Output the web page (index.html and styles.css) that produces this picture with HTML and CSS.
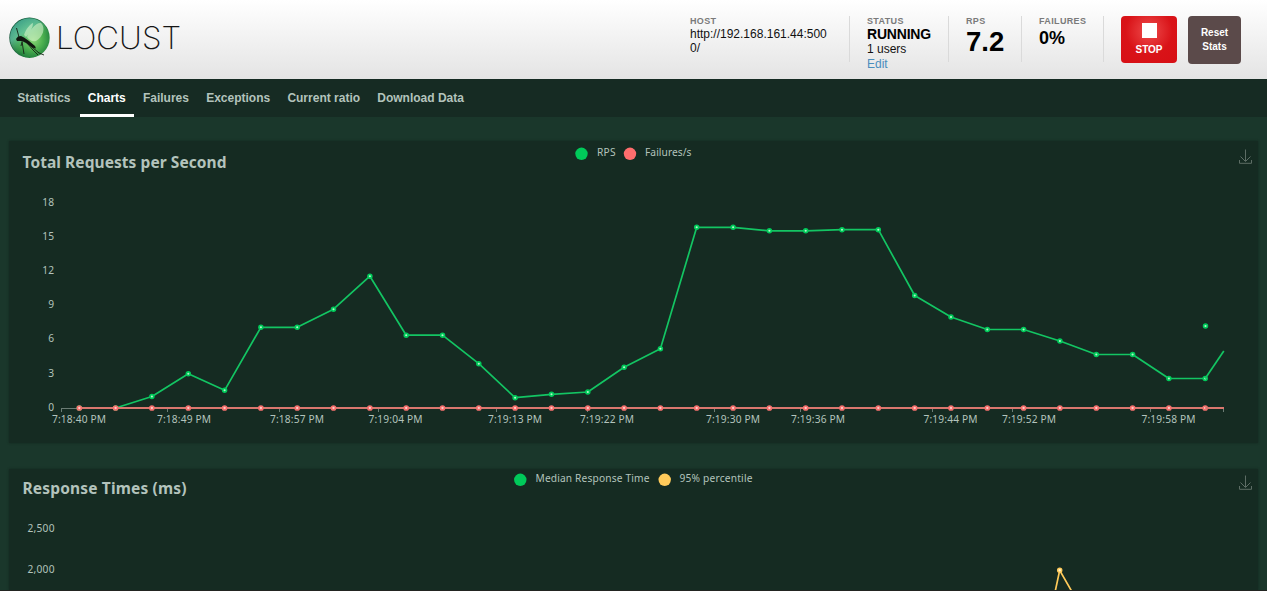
FILE: index.html
```html
<!DOCTYPE html>
<html lang="en">
<head>
<meta charset="utf-8">
<title>Locust</title>
<link rel="stylesheet" href="styles.css">
</head>
<body>
<header class="top">
  <div class="brand">
    <svg class="logo" width="42" height="42" viewBox="0 0 42 42">
      <defs>
        <radialGradient id="orb" cx="58%" cy="55%" r="56%">
          <stop offset="0" stop-color="#8fd879"/><stop offset=".45" stop-color="#4cb04f"/><stop offset=".8" stop-color="#25853f"/><stop offset="1" stop-color="#125638"/>
        </radialGradient>
        <linearGradient id="sheen" x1="0" y1="0" x2=".7" y2="1">
          <stop offset="0" stop-color="#2c9b80"/><stop offset=".4" stop-color="#71ceb0" stop-opacity=".7"/><stop offset=".75" stop-color="#5ec44f" stop-opacity="0"/>
        </linearGradient>
      </defs>
      <circle cx="20.5" cy="20.700" r="20.2" fill="url(#orb)"/>
      <circle cx="20.5" cy="20.700" r="19.5" fill="url(#sheen)"/>
      <path d="M15 18C17 12 21 7 24 6C24 11 20 17 17 20ZM18 20C21 13 27 5 32 6C37 11 34 20 27 24C23 25 20 23 18 20Z" fill="#d5f3cc" opacity=".6"/>
      <path d="M7 22L9 19.500L12 19L15 20.500L20 24L26 29L27 31.500L23 30.500L17 26L13 24L8 24Z" fill="#10170f"/>
      <path d="M10 20L7.500 11M13 24L14 31L15 37M13 25L12 29M18 26L24 33L29 38M23 30L30 36L35 38" fill="none" stroke="#152014" stroke-width=".9"/>
    </svg>
    <svg class="wordmark" width="126" height="42" viewBox="0 0 126 42"><text x="-1" y="32.300" textLength="125" lengthAdjust="spacingAndGlyphs">LOCUST</text></svg>
  </div>
  <div class="boxes">
    <div class="box host"><div class="label">HOST</div><div class="value">http://192.168.161.44:5000/</div></div>
    <div class="box status"><div class="label">STATUS</div><div class="running">RUNNING</div><div class="value">1 users</div><a class="edit">Edit</a></div>
    <div class="box rps"><div class="label">RPS</div><div class="big">7.2</div></div>
    <div class="box fail"><div class="label">FAILURES</div><div class="percent">0%</div></div>
    <button class="btn stop"><span class="square"></span>STOP</button>
    <button class="btn reset">Reset<br>Stats</button>
  </div>
</header>
<nav class="tabs">
  <a class="tab">Statistics</a><a class="tab active">Charts</a><a class="tab">Failures</a><a class="tab">Exceptions</a><a class="tab">Current ratio</a><a class="tab">Download Data</a>
</nav>
<main class="charts">
  <svg class="chart" width="1249" height="302" viewBox="9 141 1249 302">
    <defs>
      <marker id="g" markerUnits="userSpaceOnUse" markerWidth="8" markerHeight="8" refX="4" refY="4"><circle cx="4" cy="4" r="1.900" fill="#b4f5cb" stroke="#00ca5a" stroke-width="1.700"/></marker>
      <marker id="r" markerUnits="userSpaceOnUse" markerWidth="8" markerHeight="8" refX="4" refY="4"><circle cx="4" cy="4" r="2" fill="#ffc9c6" stroke="#f5706d" stroke-width="1.700"/></marker>
    </defs>
    <text class="title" x="22.500" y="168" textLength="204">Total Requests per Second</text>
    <circle cx="581.500" cy="153.800" r="6.200" fill="#00ca5a"/><text x="597" y="156" textLength="18.500">RPS</text>
    <circle cx="630" cy="153.800" r="6.200" fill="#ff6d6d"/><text x="645" y="156" textLength="46.500">Failures/s</text>
    <path class="save" d="M1245.500 149.500V161M1240.500 156.500L1245.500 161.500L1250.500 156.500M1239.500 160V163.300H1251.500V160"/>
    <g class="yaxis">
      <text x="54" y="206">18</text><text x="54" y="240">15</text><text x="54" y="274">12</text><text x="54" y="308">9</text><text x="54" y="342">6</text><text x="54" y="377">3</text><text x="54" y="411">0</text>
    </g>
    <path class="axis" d="M61 408.500H1224M61.500 408V412M167.500 408V412M279.500 408V412M378.500 408V412M496.500 408V412M587.500 408V412M714.500 408V412M800.500 408V412M932.500 408V412M1012.500 408V412M1150.500 408V412M1223.500 408V412"/>
    <g class="xaxis">
      <text x="52" y="423" textLength="54">7:18:40 PM</text><text x="157" y="423" textLength="54">7:18:49 PM</text><text x="270" y="423" textLength="54">7:18:57 PM</text><text x="368.500" y="423" textLength="54">7:19:04 PM</text><text x="488" y="423" textLength="54">7:19:13 PM</text><text x="580" y="423" textLength="54">7:19:22 PM</text><text x="706" y="423" textLength="54">7:19:30 PM</text><text x="791" y="423" textLength="54">7:19:36 PM</text><text x="923.500" y="423" textLength="54">7:19:44 PM</text><text x="1002" y="423" textLength="54">7:19:52 PM</text><text x="1141.500" y="423" textLength="54">7:19:58 PM</text>
    </g>
    <path class="line green" d="M79.300 408L115.600 408L151.900 396.500L188.300 373.700L224.600 390.300L260.900 327.300L297.200 327.300L333.500 309.200L369.900 276.200L406.200 335.200L442.500 335.200L478.800 363.700L515.100 397.700L551.500 394.300L587.800 392L624.100 367.200L660.400 348.800L696.700 227.300L733.100 227.300L769.400 230.800L805.700 230.800L842 229.700L878.300 229.700L914.700 295.500L951 317L987.300 329.500L1023.600 329.500L1059.900 341L1096.300 354.500L1132.600 354.500L1168.900 378.500L1205.200 378.500"/>
    <path class="line-tail" d="M1205.200 378.500L1223.800 351"/>
    <circle cx="1205.500" cy="326" r="1.900" fill="#b4f5cb" stroke="#00ca5a" stroke-width="1.700"/>
    <path class="line red" d="M79.300 408L115.600 408L151.900 408L188.300 408L224.600 408L260.900 408L297.200 408L333.500 408L369.900 408L406.200 408L442.500 408L478.800 408L515.100 408L551.500 408L587.800 408L624.100 408L660.400 408L696.700 408L733.100 408L769.400 408L805.700 408L842 408L878.300 408L914.700 408L951 408L987.300 408L1023.600 408L1059.900 408L1096.300 408L1132.600 408L1168.900 408L1205.200 408"/>
    <path class="red-tail" d="M1205.200 408H1224"/>
  </svg>
  <svg class="chart" width="1249" height="121" viewBox="9 469 1249 121">
    <text class="title" x="22.500" y="494" textLength="164">Response Times (ms)</text>
    <circle cx="520.300" cy="479.800" r="6.200" fill="#00ca5a"/><text x="535.500" y="482" textLength="114">Median Response Time</text>
    <circle cx="664.700" cy="479.800" r="6.200" fill="#ffca5a"/><text x="679.500" y="482" textLength="73">95% percentile</text>
    <path class="save" d="M1245.500 475.500V487M1240.500 482.500L1245.500 487.500L1250.500 482.500M1239.500 486V489.300H1251.500V486"/>
    <g class="yaxis"><text x="54.500" y="532" textLength="27">2,500</text><text x="54.500" y="573" textLength="27">2,000</text></g>
    <path d="M1051 611L1059.700 570.300L1083 611" fill="none" stroke="#ffca5a" stroke-width="1.700"/>
    <circle cx="1059.700" cy="570.300" r="2" fill="#fff2cc" stroke="#ffca5a" stroke-width="1.500"/>
  </svg>
</main>
</body>
</html>
```
FILE: styles.css
```css
* { box-sizing: border-box; }
body {
  margin: 0;
  height: 591px;
  overflow: hidden;
  background: #1a372b;
  font-family: "Liberation Sans", Arial, sans-serif;
  border-bottom: 1px solid #222421;
}
.top {
  height: 79px;
  display: flex;
  justify-content: space-between;
  padding-right: 26px;
  background: linear-gradient(#fff, #fbfbfb 15%, #e4e4e4);
}
.brand { display: flex; padding: 17px 0 0 9px; gap: 6px; }
.wordmark text { font-family: Inter, Lato, sans-serif; font-weight: 200; font-size: 31px; fill: #151515; }
.boxes { display: flex; padding-top: 16px; }
.box { height: 46px; border-right: 1px solid #dadada; font-size: 12px; line-height: 14px; color: #111; }
.label { font-size: 9px; font-weight: 700; line-height: 11px; letter-spacing: .35px; color: #7a7a7a; }
.host { width: 160px; }
.host .value { width: 140px; word-break: break-all; }
.status { width: 99px; padding-left: 17px; }
.running { font-size: 14px; font-weight: 700; line-height: 15px; letter-spacing: -.2px; color: #000; }
.status .value { line-height: 15px; }
.edit { color: #4a8dbd; }
.rps { width: 73px; padding-left: 17px; }
.big { font-size: 27.500px; font-weight: 700; line-height: 30px; color: #000; }
.fail { width: 82px; padding-left: 17px; }
.percent { font-size: 18px; font-weight: 700; line-height: 23px; color: #000; }
.btn {
  height: 47px;
  padding: 0;
  border: 0;
  border-radius: 4px;
  font: 700 10px/14px "Liberation Sans", Arial, sans-serif;
  color: #fff;
}
.stop {
  width: 56px;
  margin-left: 17px;
  display: flex;
  flex-direction: column;
  align-items: center;
  padding-top: 7px;
  background: radial-gradient(circle at 50% 32%, #ee4c4c, #d91318 55%, #d70f15);
}
.square { width: 15px; height: 15px; margin-bottom: 5px; background: #fff; }
.reset { width: 53px; height: 48px; margin-left: 11px; background: #5b4a4a; }
.tabs { height: 38px; display: flex; padding-left: 9px; gap: 1px; background: #162b23; }
.tab {
  padding: 0 8px 0 8.200px;
  font-size: 12px;
  font-weight: 700;
  line-height: 38px;
  color: #b3c3bc;
}
.active { color: #fff; border-bottom: 3px solid #fff; }
.charts { display: flex; flex-direction: column; gap: 26px; padding: 24px 9px 0; }
.chart { flex: none; display: block; background: #152b22; box-shadow: 0 0 2px #12261e; }
.chart text { font-family: "Noto Sans", "Open Sans", sans-serif; font-size: 10.200px; fill: #b3c3bc; }
.chart .title { font-size: 15.500px; font-weight: 700; }
.yaxis { text-anchor: end; }
.save { fill: none; stroke: #5d6d65; stroke-width: 1; }
.axis { fill: none; stroke: #6b7c74; stroke-width: 1; }
.line, .line-tail, .red-tail { fill: none; stroke-width: 1.700; stroke-linejoin: bevel; }
.green { stroke: #13c563; marker-start: url(#g); marker-mid: url(#g); marker-end: url(#g); }
.line-tail { stroke: #13c563; }
.red { stroke: #d9776e; stroke-width: 2; marker-start: url(#r); marker-mid: url(#r); marker-end: url(#r); }
.red-tail { stroke: #d9776e; stroke-width: 2; }
```
